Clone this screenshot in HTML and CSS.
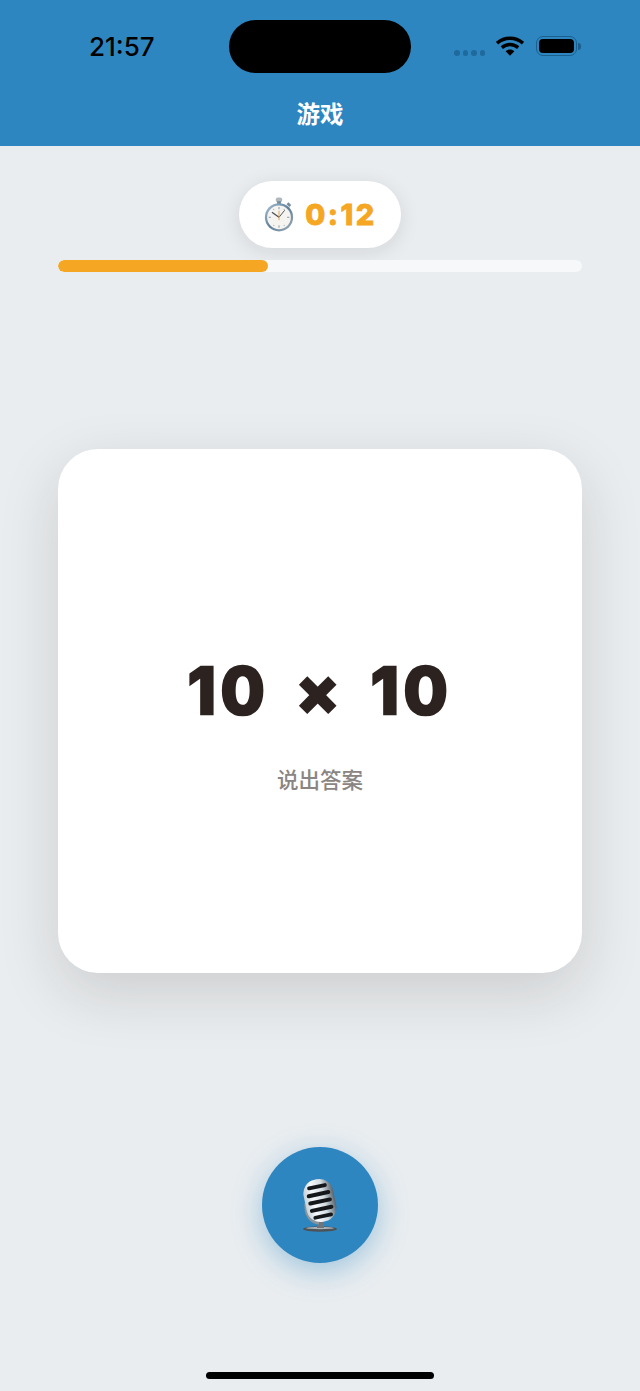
FILE: index.html
```html
<!DOCTYPE html>
<html lang="zh">
<head>
    <meta charset="UTF-8">
    <meta name="viewport" content="width=device-width, initial-scale=1.0">
    <title>游戏</title>
    <link rel="stylesheet" href="styles.css">
</head>
<body>
    <div class="app">
        <header class="top">
            <div class="status-bar">
                <span class="clock">21:57</span>
                <div class="island"></div>
                <div class="status-icons">
                    <div class="signal"><i></i><i></i><i></i><i></i></div>
                    <svg class="wifi" width="28" height="20" viewBox="0 0 28 20">
                        <path d="M1 7.2C8.4 .6 19.6 .6 27 7.2" fill="none" stroke="#000" stroke-width="3.4"/>
                        <path d="M5.8 11.6C10.6 7.4 17.4 7.4 22.2 11.6" fill="none" stroke="#000" stroke-width="3.4"/>
                        <path d="M9.6 15.2C12.2 12.9 15.8 12.9 18.4 15.2L14 19.8Z" fill="#000"/>
                    </svg>
                    <div class="battery"><div class="battery-level"></div></div>
                    <div class="battery-cap"></div>
                </div>
            </div>
            <h1>游戏</h1>
        </header>

        <main class="game">
            <div class="timer">
                <svg class="stopwatch" width="32" height="35" viewBox="0 0 34 36">
                    <defs>
                        <linearGradient id="ring" x1="0" y1="0" x2="1" y2="1">
                            <stop offset="0" stop-color="#a9c3d6"/>
                            <stop offset="0.5" stop-color="#5f7f99"/>
                            <stop offset="1" stop-color="#a3aeb7"/>
                        </linearGradient>
                    </defs>
                    <rect x="13.5" y="0" width="7" height="5" rx="2.4" fill="#b0b8bd"/>
                    <rect x="15" y="4" width="4" height="4" fill="#6f8799"/>
                    <path d="M27 5l3 3-2 2-3-3z" fill="#7b8c99"/>
                    <circle cx="17" cy="21" r="15" fill="url(#ring)"/>
                    <circle cx="17" cy="21" r="12.6" fill="#f5f4f1"/>
                    <g fill="#9aa3ab">
                        <rect x="16.4" y="10" width="1.2" height="2.4"/>
                        <rect x="16.4" y="29.6" width="1.2" height="2.4"/>
                        <rect x="6" y="20.4" width="2.4" height="1.2"/>
                        <rect x="25.6" y="20.4" width="2.4" height="1.2"/>
                        <circle cx="11.5" cy="12.5" r=".6"/>
                        <circle cx="22.5" cy="12.5" r=".6"/>
                        <circle cx="11.5" cy="29.5" r=".6"/>
                        <circle cx="22.5" cy="29.5" r=".6"/>
                    </g>
                    <path d="M17 21L9.5 15.5" stroke="#4a4f55" stroke-width="1.3"/>
                    <path d="M17 21L23 13.5" stroke="#4a4f55" stroke-width="1"/>
                    <path d="M17 14V24" stroke="#d99a3a" stroke-width="0.9"/>
                </svg>
                <span class="timer-value">0:12</span>
            </div>
            <div class="progress"><div class="progress-fill" style="width: 40%"></div></div>

            <section class="card">
                <div class="question">10 × 10</div>
                <p class="hint">说出答案</p>
            </section>

            <button class="mic-button">
                <svg width="40" height="56" viewBox="0 0 40 56">
                    <defs>
                        <linearGradient id="chrome" x1="0" y1="0" x2="1" y2="0">
                            <stop offset="0" stop-color="#c5d0d8"/>
                            <stop offset="0.3" stop-color="#f7fafc"/>
                            <stop offset="0.65" stop-color="#d3dde4"/>
                            <stop offset="1" stop-color="#59636b"/>
                        </linearGradient>
                    </defs>
                    <ellipse cx="20" cy="52" rx="17" ry="2.8" fill="#4c5358"/>
                    <ellipse cx="20" cy="51" rx="14" ry="1.2" fill="#aab2b8"/>
                    <rect x="17" y="44" width="7" height="7" fill="#6d757b"/>
                    <path d="M6 26c-1 12 5 20 13 20" fill="none" stroke="#8a949b" stroke-width="3"/>
                    <g transform="rotate(-12 20 24)">
                        <rect x="5" y="2" width="30" height="43" rx="14" fill="url(#chrome)"/>
                        <g fill="#15181b">
                            <rect x="10" y="7.5" width="20" height="3.8" rx="1.9"/>
                            <rect x="8" y="15" width="24" height="4" rx="2"/>
                            <rect x="8" y="22.5" width="24" height="4" rx="2"/>
                            <rect x="8" y="30" width="24" height="4" rx="2"/>
                            <rect x="10" y="37.5" width="20" height="3.8" rx="1.9"/>
                        </g>
                    </g>
                </svg>
            </button>
        </main>

        <div class="home-bar"><div class="home-indicator"></div></div>
    </div>
</body>
</html>
```

FILE: styles.css
```css
* {
    margin: 0;
    padding: 0;
    box-sizing: border-box;
}

body {
    font-family: "Inter", "Noto Sans CJK SC", sans-serif;
    background: #e9edf0;
}

.app {
    width: 640px;
    height: 1391px;
    display: flex;
    flex-direction: column;
    overflow: hidden;
}

.top {
    height: 146px;
    background: #2e86c1;
    padding-top: 20px;
}

.status-bar {
    height: 53px;
    display: flex;
    align-items: center;
    padding: 0 58px 0 89px;
}

.clock {
    width: 140px;
    font-size: 26px;
    font-weight: 500;
    color: #000;
}

.island {
    width: 182px;
    height: 53px;
    border-radius: 27px;
    background: #000;
}

.status-icons {
    flex: 1;
    display: flex;
    align-items: center;
    padding-left: 43px;
}

.signal {
    display: flex;
    gap: 3px;
    margin-right: 11px;
    margin-top: 13px;
}

.signal i {
    width: 5.5px;
    height: 5.5px;
    border-radius: 50%;
    background: #1f6a9d;
}

.wifi {
    margin-right: 12px;
    margin-top: -1px;
}

.battery {
    width: 41px;
    height: 20px;
    border: 1.5px solid #1a5f8e;
    border-radius: 7px;
    padding: 2px;
    margin-top: -1px;
}

.battery-level {
    height: 100%;
    background: #000;
    border-radius: 4px;
}

.battery-cap {
    width: 3px;
    height: 7px;
    background: #1a5f8e;
    border-radius: 0 3px 3px 0;
    margin: -1px 0 0 1px;
}

.top h1 {
    margin-top: 27px;
    text-align: center;
    font-size: 23.5px;
    line-height: 30px;
    font-weight: 700;
    color: #fff;
}

.game {
    flex: 1;
    display: flex;
    flex-direction: column;
    align-items: center;
    padding: 35px 58px 0;
}

.timer {
    width: 162px;
    height: 67px;
    display: flex;
    align-items: center;
    justify-content: center;
    gap: 10px;
    background: #fff;
    border-radius: 34px;
    box-shadow: 0 4px 20px rgba(44, 24, 16, 0.1);
}

.timer-value {
    font-size: 29px;
    font-weight: 800;
    letter-spacing: 2.5px;
    color: #f5a623;
    -webkit-text-stroke: 0.8px #f5a623;
}

.progress {
    width: 100%;
    height: 12px;
    margin-top: 12px;
    background: #f6f8fa;
    border-radius: 6px;
    overflow: hidden;
}

.progress-fill {
    height: 100%;
    background: #f5a623;
    border-radius: 6px;
}

.card {
    width: 524px;
    height: 524px;
    margin-top: 177px;
    display: flex;
    flex-direction: column;
    align-items: center;
    justify-content: center;
    padding-top: 23px;
    background: #fff;
    border-radius: 40px;
    box-shadow: 0 20px 60px rgba(44, 24, 16, 0.15);
}

.question {
    font-size: 64px;
    line-height: 80px;
    font-weight: 800;
    word-spacing: 8px;
    letter-spacing: 4.5px;
    color: #2c2320;
    -webkit-text-stroke: 2.4px #2c2320;
}

.hint {
    margin-top: 34px;
    font-size: 21.5px;
    line-height: 30px;
    font-weight: 500;
    color: #8a8583;
}

.mic-button {
    width: 116px;
    height: 116px;
    margin-top: 174px;
    display: flex;
    align-items: center;
    justify-content: center;
    border: none;
    border-radius: 50%;
    background: #2e86c1;
    box-shadow: 0 8px 30px rgba(46, 134, 193, 0.4);
}

.home-bar {
    height: 19px;
    display: flex;
    justify-content: center;
    flex-shrink: 0;
}

.home-indicator {
    width: 228px;
    height: 7px;
    border-radius: 4px;
    background: #000;
}
```
